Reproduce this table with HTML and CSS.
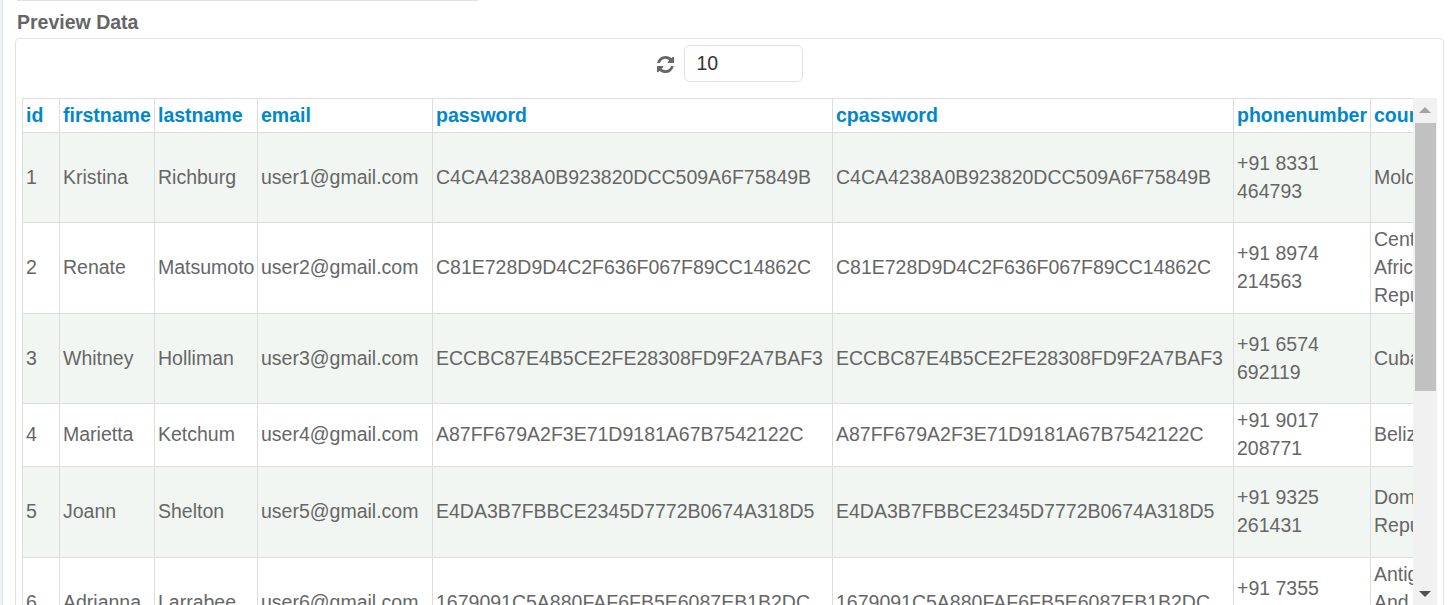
FILE: index.html
```html
<!DOCTYPE html>
<html>
<head>
<meta charset="utf-8">
<link rel="stylesheet" href="styles.css">
</head>
<body>
<div class="shell">
  <div class="rail"></div>
  <main class="content">
    <div class="topline"></div>
    <h2 class="section-title">Preview Data</h2>
    <section class="panel">
      <div class="toolbar">
        <svg class="refresh" viewBox="0 0 1536 1536" aria-hidden="true"><path d="M1511 928q0 5-1 7-64 268-268 434.5t-478 166.5q-146 0-282.5-55t-243.5-157l-129 129q-19 19-45 19t-45-19-19-45v-448q0-26 19-45t45-19h448q26 0 45 19t19 45-19 45l-137 137q71 66 161 102t187 36q134 0 250-65t186-179q11-17 53-117 8-23 30-23h192q13 0 22.5 9.5t9.5 22.5zm25-800v448q0 26-19 45t-45 19h-448q-26 0-45-19t-19-45 19-45l138-138q-148-137-349-137-134 0-250 65t-186 179q-11 17-53 117-8 23-30 23h-199q-13 0-22.5-9.5t-9.5-22.5v-7q65-268 270-434.5t480-166.5q146 0 284 55.5t245 156.5l130-129q19-19 45-19t45 19 19 45z"/></svg>
        <input class="limit" type="text" value="10">
      </div>
      <div class="grid-wrap">
        <div class="viewport">
          <table class="data">
            <colgroup>
              <col class="c-id"><col class="c-first"><col class="c-last"><col class="c-email">
              <col class="c-pass"><col class="c-cpass"><col class="c-phone"><col class="c-country"><col class="c-addr">
            </colgroup>
            <thead>
              <tr><th>id</th><th>firstname</th><th>lastname</th><th>email</th><th>password</th><th>cpassword</th><th>phonenumber</th><th>country</th><th>address</th></tr>
            </thead>
            <tbody>
              <tr><td>1</td><td>Kristina</td><td>Richburg</td><td>user1@gmail.com</td><td>C4CA4238A0B923820DCC509A6F75849B</td><td>C4CA4238A0B923820DCC509A6F75849B</td><td>+91 8331 464793</td><td>Moldova</td><td>12 Park Street<br>Springfield<br>62704</td></tr>
              <tr><td>2</td><td>Renate</td><td>Matsumoto</td><td>user2@gmail.com</td><td>C81E728D9D4C2F636F067F89CC14862C</td><td>C81E728D9D4C2F636F067F89CC14862C</td><td>+91 8974 214563</td><td>Central African Republic</td><td>44 Hill Road<br>Bangui</td></tr>
              <tr><td>3</td><td>Whitney</td><td>Holliman</td><td>user3@gmail.com</td><td>ECCBC87E4B5CE2FE28308FD9F2A7BAF3</td><td>ECCBC87E4B5CE2FE28308FD9F2A7BAF3</td><td>+91 6574 692119</td><td>Cuba</td><td>8 Ocean Drive<br>Havana<br>10400</td></tr>
              <tr><td>4</td><td>Marietta</td><td>Ketchum</td><td>user4@gmail.com</td><td>A87FF679A2F3E71D9181A67B7542122C</td><td>A87FF679A2F3E71D9181A67B7542122C</td><td>+91 9017 208771</td><td>Belize</td><td>3 Palm Lane</td></tr>
              <tr><td>5</td><td>Joann</td><td>Shelton</td><td>user5@gmail.com</td><td>E4DA3B7FBBCE2345D7772B0674A318D5</td><td>E4DA3B7FBBCE2345D7772B0674A318D5</td><td>+91 9325 261431</td><td>Dominican Republic</td><td>21 Main Street<br>Santo Domingo<br>10101</td></tr>
              <tr><td>6</td><td>Adrianna</td><td>Larrabee</td><td>user6@gmail.com</td><td>1679091C5A880FAF6FB5E6087EB1B2DC</td><td>1679091C5A880FAF6FB5E6087EB1B2DC</td><td>+91 7355 480912</td><td>Antigua And Barbuda</td><td>5 Harbour Road<br>St. John's</td></tr>
              <tr><td>7</td><td>Lyndon</td><td>Beasley</td><td>user7@gmail.com</td><td>8F14E45FCEEA167A5A36DEDD4BEA2543</td><td>8F14E45FCEEA167A5A36DEDD4BEA2543</td><td>+91 8812 357746</td><td>Peru</td><td>90 Sun Avenue<br>Lima<br>15001</td></tr>
              <tr><td>8</td><td>Carissa</td><td>Hammond</td><td>user8@gmail.com</td><td>C9F0F895FB98AB9159F51FD0297E236D</td><td>C9F0F895FB98AB9159F51FD0297E236D</td><td>+91 7043 118254</td><td>Norway</td><td>17 Fjord Street</td></tr>
              <tr><td>9</td><td>Delmar</td><td>Pruitt</td><td>user9@gmail.com</td><td>45C48CCE2E2D7FBDEA1AFC51C7C6AD26</td><td>45C48CCE2E2D7FBDEA1AFC51C7C6AD26</td><td>+91 9461 530087</td><td>Kenya</td><td>2 Lake Road<br>Nairobi<br>00100</td></tr>
              <tr><td>10</td><td>Sharyn</td><td>Colburn</td><td>user10@gmail.com</td><td>D3D9446802A44259755D38E6D163E820</td><td>D3D9446802A44259755D38E6D163E820</td><td>+91 6230 874415</td><td>Chile</td><td>61 Andes Way<br>Santiago</td></tr>
            </tbody>
          </table>
        </div>
        <div class="vscroll" aria-hidden="true">
          <div class="arrow up"></div>
          <div class="track"><div class="thumb"></div></div>
          <div class="arrow down"></div>
        </div>
      </div>
    </section>
  </main>
</div>
</body>
</html>
```

FILE: styles.css
```css
html, body {
  margin: 0;
  padding: 0;
  background: #ffffff;
  overflow: hidden;
}

body {
  font-family: "Liberation Sans", Arial, sans-serif;
  font-size: 19.5px;
  line-height: 1.42857;
  color: #666666;
}

.shell {
  display: flex;
  height: 605px;
}

.rail {
  width: 2px;
  flex: none;
  background: #eef1f5;
  border-right: 1px solid #dfe3e8;
}

.content {
  flex: 1;
  padding: 0 11px 0 12px;
  min-width: 0;
}

.topline {
  width: 461px;
  margin-left: 2px;
  border-top: 1px solid #e2e2e2;
}

.section-title {
  margin: 7px 0 2px 2px;
  font-size: 19.5px;
  line-height: 28px;
  font-weight: bold;
  color: #666666;
}

.panel {
  border: 1px solid #e3e3e3;
  border-radius: 4px;
  padding: 6px 6px 0;
  height: 580px;
  box-sizing: border-box;
}

.toolbar {
  display: flex;
  justify-content: center;
  align-items: center;
  gap: 10px;
  height: 37px;
  margin-bottom: 16px;
}

.refresh {
  width: 17px;
  height: 17px;
  fill: #666666;
  margin-top: 1px;
}

.limit {
  width: 119px;
  height: 37px;
  box-sizing: border-box;
  border: 1px solid #e0e0e0;
  border-radius: 6px;
  padding: 0 0 0 12px;
  font-family: "Liberation Sans", Arial, sans-serif;
  font-size: 19.5px;
  color: #333333;
  outline: none;
}

.grid-wrap {
  display: flex;
  height: 507px;
}

.viewport {
  flex: 1;
  overflow: hidden;
  min-width: 0;
}

.data {
  border-collapse: collapse;
  table-layout: fixed;
  width: 1605px;
}

.c-id { width: 37px; }
.c-first { width: 95px; }
.c-last { width: 103px; }
.c-email { width: 175px; }
.c-pass { width: 400px; }
.c-cpass { width: 401px; }
.c-phone { width: 137px; }
.c-country { width: 110px; }
.c-addr { width: 147px; }

.data th,
.data td {
  border: 1px solid #dddddd;
  padding: 3px 4px 3px 3px;
  text-align: left;
  vertical-align: middle;
  overflow: visible;
}

.data th {
  color: #0088cc;
  font-weight: bold;
  background: #ffffff;
  white-space: nowrap;
  padding-bottom: 2px;
}

.data td {
  color: #666666;
}

.data tbody tr:nth-child(odd) td {
  background: #f2f6f3;
}

.vscroll {
  width: 24px;
  flex: none;
  background: #f1f1f1;
  display: flex;
  flex-direction: column;
}

.arrow {
  height: 25px;
  flex: none;
  display: flex;
  align-items: center;
  justify-content: center;
}

.arrow.up::before,
.arrow.down::before {
  content: "";
  width: 0;
  height: 0;
  border-left: 6px solid transparent;
  border-right: 6px solid transparent;
}

.arrow.up::before {
  border-bottom: 6px solid #a3a3a3;
  margin-top: -2px;
}

.arrow.down::before {
  border-top: 6px solid #505050;
  margin-top: 2px;
}

.track {
  flex: 1;
  padding: 0 1px 0 2px;
}

.thumb {
  height: 268px;
  background: #c1c1c1;
}
```
